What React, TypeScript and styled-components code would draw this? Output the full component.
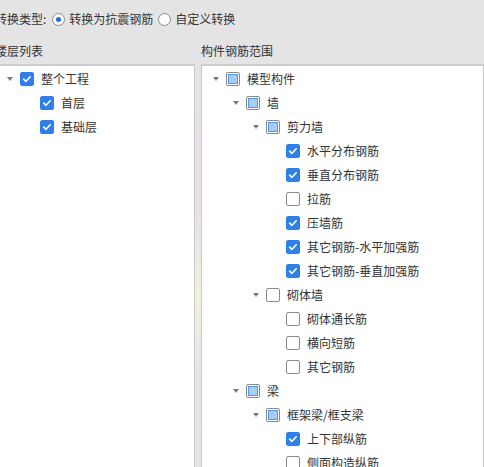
import styled, { createGlobalStyle } from "styled-components";

type CheckState = "checked" | "unchecked" | "partial";

interface TreeNode {
  label: string;
  state: CheckState;
  depth: number;
  expandable?: boolean;
}

const floors: TreeNode[] = [
  { label: "整个工程", state: "checked", depth: 0, expandable: true },
  { label: "首层", state: "checked", depth: 1 },
  { label: "基础层", state: "checked", depth: 1 },
];

const rebars: TreeNode[] = [
  { label: "模型构件", state: "partial", depth: 0, expandable: true },
  { label: "墙", state: "partial", depth: 1, expandable: true },
  { label: "剪力墙", state: "partial", depth: 2, expandable: true },
  { label: "水平分布钢筋", state: "checked", depth: 3 },
  { label: "垂直分布钢筋", state: "checked", depth: 3 },
  { label: "拉筋", state: "unchecked", depth: 3 },
  { label: "压墙筋", state: "checked", depth: 3 },
  { label: "其它钢筋-水平加强筋", state: "checked", depth: 3 },
  { label: "其它钢筋-垂直加强筋", state: "checked", depth: 3 },
  { label: "砌体墙", state: "unchecked", depth: 2, expandable: true },
  { label: "砌体通长筋", state: "unchecked", depth: 3 },
  { label: "横向短筋", state: "unchecked", depth: 3 },
  { label: "其它钢筋", state: "unchecked", depth: 3 },
  { label: "梁", state: "partial", depth: 1, expandable: true },
  { label: "框架梁/框支梁", state: "partial", depth: 2, expandable: true },
  { label: "上下部纵筋", state: "checked", depth: 3 },
  { label: "侧面构造纵筋", state: "unchecked", depth: 3 },
];

function CheckBox({ state }: { state: CheckState }) {
  if (state === "checked") {
    return (
      <Box $state={state}>
        <svg width="14" height="14" viewBox="0 0 14 14">
          <path
            d="M3.2 7.2 L5.8 9.7 L10.8 4.4"
            fill="none"
            stroke="#fff"
            strokeWidth="1.9"
            strokeLinecap="round"
            strokeLinejoin="round"
          />
        </svg>
      </Box>
    );
  }
  return <Box $state={state}>{state === "partial" && <Partial />}</Box>;
}

function Tree({ nodes }: { nodes: TreeNode[] }) {
  return (
    <>
      {nodes.map((n, i) => (
        <Row key={i} $depth={n.depth}>
          <Toggle>{n.expandable && <Caret />}</Toggle>
          <CheckBox state={n.state} />
          <Label>{n.label}</Label>
        </Row>
      ))}
    </>
  );
}

export default function App() {
  return (
    <>
      <GlobalStyle />
      <Page>
        <Main>
          <TopBar>
            <span>转换类型:</span>
            <RadioItem>
              <Radio $on />
              转换为抗震钢筋
            </RadioItem>
            <RadioItem>
              <Radio />
              自定义转换
            </RadioItem>
          </TopBar>
          <Columns>
            <Section>
              <Heading>楼层列表</Heading>
              <Panel>
                <Tree nodes={floors} />
              </Panel>
            </Section>
            <Section>
              <Heading>构件钢筋范围</Heading>
              <Panel>
                <Tree nodes={rebars} />
              </Panel>
            </Section>
          </Columns>
        </Main>
      </Page>
    </>
  );
}

const GlobalStyle = createGlobalStyle`
  html, body {
    margin: 0;
    padding: 0;
    background: #e4e4e4;
  }
  body {
    font-family: "Noto Sans CJK SC", "Noto Sans", sans-serif;
    font-size: 12px;
    color: #333;
  }
`;

const Page = styled.div`
  width: 484px;
  height: 467px;
  overflow: hidden;
  background: #e4e4e4;
`;

const Main = styled.div`
  margin-left: -5px;
  display: flex;
  flex-direction: column;
  height: 100%;
`;

const TopBar = styled.div`
  height: 38px;
  display: flex;
  align-items: center;
  gap: 5px;
  line-height: 1;
  padding-bottom: 0;
`;

const RadioItem = styled.label`
  display: flex;
  align-items: center;
  gap: 4px;
  &:first-of-type {
    margin-left: 1px;
  }
`;

const Radio = styled.span<{ $on?: boolean }>`
  width: 13px;
  height: 13px;
  box-sizing: border-box;
  border-radius: 50%;
  border: 1px solid #8a8a8a;
  background: #fff;
  position: relative;
  &::after {
    content: "";
    display: ${(p) => (p.$on ? "block" : "none")};
    position: absolute;
    left: 3px;
    top: 3px;
    width: 5px;
    height: 5px;
    border-radius: 50%;
    background: #1a6fe0;
  }
`;

const Columns = styled.div`
  flex: 1;
  display: grid;
  grid-template-columns: 200px 1fr;
  column-gap: 6px;
  min-height: 0;
  background: linear-gradient(180deg, #e4e4e4 0%, #e8e0e8 40%, #f3f0dc 60%, #e6e3e8 80%, #e4e4e4 100%);
`;

const Section = styled.div`
  display: flex;
  flex-direction: column;
  background: #e4e4e4;
  min-height: 0;
`;

const Heading = styled.div`
  height: 26px;
  display: flex;
  align-items: center;
  padding-top: 0;
  line-height: 1;
`;

const Panel = styled.div`
  flex: 1;
  background: #fff;
  border: 1px solid #c9c9c9;
  border-bottom: none;
  border-top-width: 2px;
  border-top-color: #cfcfcf;
  padding: 1px 0 0 10px;
  overflow: hidden;
`;

const Row = styled.div<{ $depth: number }>`
  height: 24px;
  display: flex;
  align-items: center;
  padding-left: ${(p) => p.$depth * 20}px;
  white-space: nowrap;
`;

const Toggle = styled.span`
  width: 14px;
  height: 14px;
  display: flex;
  align-items: center;
  flex-shrink: 0;
`;

const Caret = styled.span`
  width: 0;
  height: 0;
  margin-left: 1px;
  border-left: 3.5px solid transparent;
  border-right: 3.5px solid transparent;
  border-top: 4px solid #7a7a7a;
`;

const Box = styled.span<{ $state: CheckState }>`
  width: 14px;
  height: 14px;
  box-sizing: border-box;
  flex-shrink: 0;
  border-radius: 2px;
  display: flex;
  align-items: center;
  justify-content: center;
  background: ${(p) => (p.$state === "checked" ? "#2f7fe8" : "#fff")};
  border: 1px solid ${(p) => (p.$state === "checked" ? "#2f7fe8" : "#8a8a8a")};
`;

const Partial = styled.span`
  width: 10px;
  height: 10px;
  box-sizing: border-box;
  background: #a7cdfb;
  border: 1px solid #4b97f2;
`;

const Label = styled.span`
  margin-left: 7px;
  line-height: 1;
`;
